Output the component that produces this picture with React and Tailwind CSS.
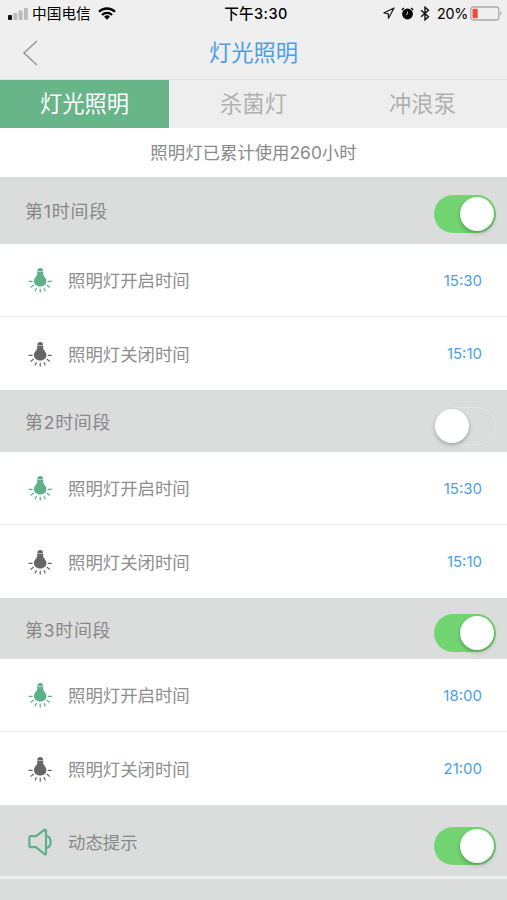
import React, { useState } from "react";
import clsx from "clsx";

const sections = [
  { title: "第1时间段", on: true, start: "15:30", end: "15:10", head: "h-[67px] pt-[18px]", label: "top-[-2px] tracking-[0.8px]" },
  { title: "第2时间段", on: false, start: "15:30", end: "15:10", head: "h-[62px] pt-[17px]", label: "top-[-3px] tracking-[0.7px]" },
  { title: "第3时间段", on: true, start: "18:00", end: "21:00", head: "h-[61px] pt-[16px]", label: "top-[-2px] tracking-[0.7px]" },
];

const tabs = ["灯光照明", "杀菌灯", "冲浪泵"];

const BulbIcon = ({ className }) => (
  <svg viewBox="0 0 24 26" className={clsx("h-[26px] w-6 shrink-0", className)} fill="currentColor">
    <path d="M9.300 3.900C9.300 2 10.400 1 12.200 1s2.900 1 2.900 2.900z" />
    <path d="M9.200 4.500h6v2.700c0 1.800 3.200 3.500 3.200 6.700 0 3.200-2.300 5.500-6.200 5.500S6 17.100 6 13.900c0-3.200 3.200-4.900 3.200-6.700z" />
    <path
      d="M1 14.300h3.200M20.200 14.300h3.200M2.900 20.200l2.500-1.900M21.500 20.200L19 18.300M7.200 24l1.100-2.500M17.200 24l-1.100-2.500M12.200 25.200v-3"
      fill="none"
      stroke="currentColor"
      strokeWidth="1.200"
      strokeLinecap="round"
    />
  </svg>
);

const SpeakerIcon = () => (
  <svg
    viewBox="0 0 26 28"
    className="h-7 w-[26px] shrink-0 text-[#5fb08a]"
    fill="none"
    stroke="currentColor"
    strokeWidth="2.200"
    strokeLinejoin="round"
    strokeLinecap="round"
  >
    <path d="M3.700 8.200H9l8.300-6.200c.9-.6 1.700-.3 1.700.6v22.800c0 .9-.8 1.200-1.700.6L9 19.200H3.700c-.8 0-1.300-.5-1.300-1.300V9.500c0-.8.5-1.300 1.300-1.300z" />
    <path d="M19.500 8c5.500 1.200 5.500 10.800 0 12" />
  </svg>
);

const Toggle = ({ on, onClick }) => (
  <button
    onClick={onClick}
    className={clsx(
      "flex h-[38px] w-[62px] shrink-0 items-center rounded-full",
      on ? "justify-end bg-[#72d572] pr-[2px]" : "border-[1.5px] border-[#e5e6e6]"
    )}
  >
    <span className="h-[34px] w-[34px] rounded-full bg-white shadow-[0_2px_4px_rgba(0,0,0,0.28)]" />
  </button>
);

const StatusBar = () => (
  <div className="flex h-7 items-center justify-between pl-2 pr-[5px] text-black">
    <div className="flex w-[180px] items-center">
      <svg viewBox="0 0 20 13" className="h-[13px] w-5">
        <rect x="0" y="7" width="4" height="5" rx="1" fill="#111" />
        <rect x="5.300" y="5" width="4" height="7" rx="1" fill="#bbb" />
        <rect x="10.600" y="2.500" width="4" height="9.500" rx="1" fill="#bbb" />
        <rect x="15.900" y="0" width="4" height="12" rx="1" fill="#bbb" />
      </svg>
      <span className="ml-1 whitespace-nowrap text-[14.700px] leading-7">中国电信</span>
      <svg viewBox="0 0 18 13" className="mb-[2px] ml-[7px] h-[13px] w-[18px]" fill="none" stroke="#000" strokeWidth="2.300">
        <path d="M1 4.800a11.300 11.300 0 0 1 16 0" />
        <path d="M4 8a7 7 0 0 1 10 0" />
        <path d="M9 12.700 6.100 9.800a4.100 4.100 0 0 1 5.800 0z" fill="#000" stroke="none" />
      </svg>
    </div>
    <span className="relative left-px whitespace-nowrap text-[14.500px] font-medium leading-7 tracking-[0.45px]">
      下午3:30
    </span>
    <div className="flex w-[180px] items-center justify-end">
      <svg viewBox="0 0 12 12" className="mb-[2px] h-3 w-3" fill="none" stroke="#222" strokeWidth="1.300" strokeLinejoin="round">
        <path d="M11 1 1 5.900l4.300.9.200 4.500z" />
      </svg>
      <svg viewBox="0 0 13 13" className="mb-[2px] ml-[6px] h-[13px] w-[13px]">
        <circle cx="6.500" cy="7" r="5.400" fill="#000" />
        <path d="M.9 3A9 9 0 0 1 3 1M12.100 3A9 9 0 0 0 10 1" fill="none" stroke="#000" strokeWidth="1.500" />
        <path d="M6.500 4.400V7L4.800 8" fill="none" stroke="#ddd" strokeWidth=".8" />
      </svg>
      <svg viewBox="0 0 10 15" className="mb-[2px] ml-[6px] h-[15px] w-[10px]" fill="none" stroke="#111" strokeWidth="1.400">
        <path d="M1 4.200 8.500 10.800 5 13.800V1.200l3.500 3L1 10.800" />
      </svg>
      <span className="ml-[7px] text-[14.300px] leading-7 tracking-[-0.3px]">20%</span>
      <svg viewBox="0 0 32 15" className="mb-[2px] ml-[2px] h-[15px] w-8">
        <rect x=".8" y="1" width="28" height="13" rx="2.500" fill="none" stroke="#aaa" strokeWidth="1.300" />
        <rect x="2.500" y="2.800" width="5.200" height="9.400" rx="1" fill="#f04a3a" />
        <path d="M30.300 5.500c1.600.6 1.600 3.400 0 4z" fill="#999" />
      </svg>
    </div>
  </div>
);

const TimeRow = ({ label, time, color, divider }) => (
  <div
    className={clsx(
      "flex h-[73px] items-center bg-white pl-[28px] pr-[25px]",
      divider && "border-b border-[#e8e9e9]"
    )}
  >
    <BulbIcon className={color} />
    <span className="ml-4 flex-1 pt-[3px] text-[17.400px] text-[#8e8e8e]">{label}</span>
    <span className="pt-[2px] font-[Inter,'Liberation_Sans',sans-serif] text-[15px] text-[#4b9fe6]">{time}</span>
  </div>
);

const App = () => {
  const [activeTab, setActiveTab] = useState(0);
  const [switches, setSwitches] = useState([true, false, true, true]);

  const toggle = (index) => {
    setSwitches((prev) => prev.map((v, i) => (i === index ? !v : v)));
  };

  return (
    <div className="flex h-[900px] w-[507px] flex-col overflow-hidden bg-[#dbdddc] font-[Inter,'Noto_Sans_CJK_SC',sans-serif]">
      <div className="h-[79px] shrink-0 bg-[#efefef]">
        <StatusBar />
        <div className="flex h-[50px] items-center">
          <svg viewBox="0 0 16 26" className="ml-[22px] h-[26px] w-4" fill="none" stroke="#999" strokeWidth="1.600">
            <path d="M15 1 2 13l13 12" />
          </svg>
          <h1 className="flex-1 pr-[38px] text-center text-[22.300px] leading-[50px] text-[#4b9fe6]">灯光照明</h1>
        </div>
      </div>

      <div className="grid h-[49px] shrink-0 grid-cols-3 border-t border-[#dedfdf] bg-[#eeeeee]">
        {tabs.map((tab, index) => (
          <button
            key={tab}
            onClick={() => setActiveTab(index)}
            className={clsx(
              "text-[22.300px] leading-[48px]",
              activeTab === index ? "bg-[#67b588] text-white" : "text-[#b0b0b0]"
            )}
          >
            {tab}
          </button>
        ))}
      </div>

      <div className="h-[49px] shrink-0 bg-white text-center text-[17.400px] leading-[50px] text-[#8a8a8a]">
        照明灯已累计使用260小时
      </div>

      {sections.map((section, index) => (
        <div key={section.title} className="shrink-0">
          <div className={clsx("flex items-start justify-between pl-[25px] pr-[11px]", section.head)}>
            <span className={clsx("relative text-[17.900px] leading-[38px] text-[#888888]", section.label)}>
              {section.title}
            </span>
            <Toggle on={switches[index]} onClick={() => toggle(index)} />
          </div>
          <TimeRow label="照明灯开启时间" time={section.start} color="text-[#5fb08a]" divider />
          <TimeRow label="照明灯关闭时间" time={section.end} color="text-[#666666]" />
        </div>
      ))}

      <div className="flex h-[74px] shrink-0 items-center border-b-[3px] border-[#eeeeee] pl-[27px] pr-[11px]">
        <div className="pt-[2px]">
          <SpeakerIcon />
        </div>
        <span className="ml-[15px] flex-1 pt-[5px] text-[17.400px] text-[#888888]">动态提示</span>
        <div className="pt-[10px]">
          <Toggle on={switches[3]} onClick={() => toggle(3)} />
        </div>
      </div>
    </div>
  );
};

export default App;
